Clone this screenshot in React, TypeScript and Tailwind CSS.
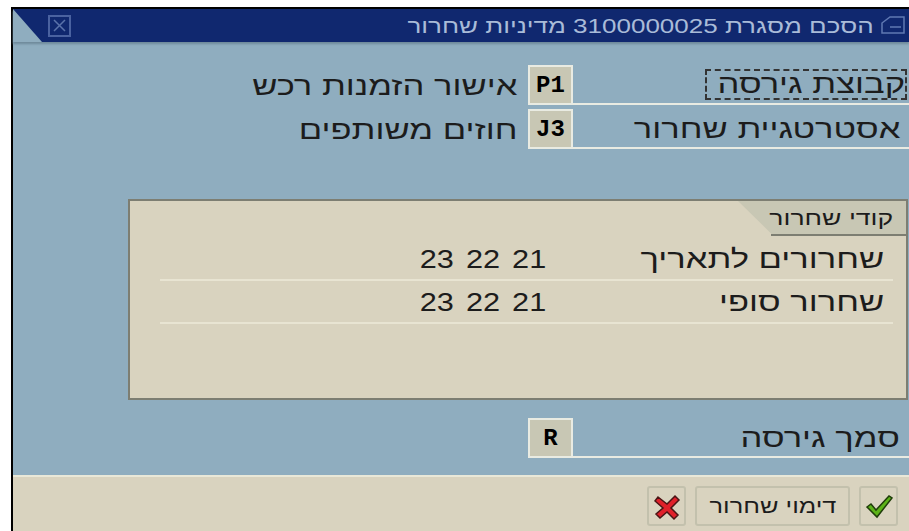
import type { ReactNode } from "react";

const sans = "font-['Liberation_Sans',sans-serif]";

// the screen font is drawn about a third wider than it is tall
const Wide = ({ children }: { children: ReactNode }) => (
  <span className="inline-block origin-right scale-x-[1.33] whitespace-nowrap">{children}</span>
);

const FieldRow = ({
  label,
  code,
  text,
  focused,
}: {
  label: string;
  code: string;
  text?: string;
  focused?: boolean;
}) => (
  <div className="flex h-[40px] w-full items-stretch">
    <div dir="rtl" className="flex w-[515px] items-center pr-[11px] pt-[2px] text-[26px] leading-none text-[#1c1c1c]">
      <Wide>{text}</Wide>
    </div>
    <div className="flex w-[45px] items-center justify-center border-2 border-[#e9ebe2] bg-[#c8c7b4] pt-[2px] font-['Liberation_Mono',monospace] text-[24px] font-bold text-black">
      {code}
    </div>
    <div dir="rtl" className="flex flex-1 items-center border-b-2 border-[#e9ebe2] pr-[2px] text-[26px] leading-none text-[#1c1c1c]">
      {focused ? (
        <span className="flex h-[31px] w-[202px] items-center border-2 border-dashed border-[#333] pb-[1px]">
          <Wide>{label}</Wide>
        </span>
      ) : (
        <span className="pr-[7px] pt-[2px]">
          <Wide>{label}</Wide>
        </span>
      )}
    </div>
  </div>
);

const CodeLine = ({ label, values }: { label: string; values: string }) => (
  <div className="flex h-[43px] items-center border-b-2 border-[#e8e4d2]">
    <span className="w-[386px] text-right text-[26px] leading-none text-[#1c1c1c]">
      <span className="inline-block origin-right scale-x-[1.18] whitespace-nowrap [word-spacing:3px]">{values}</span>
    </span>
    <span dir="rtl" className="flex-1 pr-[9px] text-[26px] leading-none text-[#1c1c1c]">
      <Wide>{label}</Wide>
    </span>
  </div>
);

const ToolButton = ({ children, wide }: { children: ReactNode; wide?: boolean }) => (
  <button
    className={`flex h-[40px] items-center justify-center rounded-[3px] border-2 border-[#c3c1ad] bg-[#d9d3bf] ${wide ? "w-[155px]" : "w-[39px]"}`}
  >
    {children}
  </button>
);

export default function App() {
  return (
    <div className={`h-[531px] w-[909px] overflow-hidden bg-white pl-[11px] pt-[7px] ${sans}`}>
      <div className="flex h-[524px] flex-col border-l-2 border-t-2 border-black bg-[#8fadbf]">
        {/* title bar with the cut corner on the left */}
        <div className="relative flex h-[33px] shrink-0 items-center bg-[#10286f] shadow-[0_2px_2px_#6f8a9b]">
          <svg className="absolute left-0 top-0" width="29" height="33" viewBox="0 0 29 33">
            <polygon points="0,0 0,33 29,33" fill="#8fadbf" />
          </svg>
          <div className="ml-[35px] flex h-[22px] w-[23px] items-center justify-center border-2 border-[#4a62a0]">
            <svg width="13" height="13" viewBox="0 0 13 13" stroke="#5a72aa" strokeWidth="1.5">
              <path d="M1 1 12 12M12 1 1 12" />
            </svg>
          </div>
          <div dir="rtl" className="ml-auto mr-[4px] flex items-center gap-[7px] text-[#a9bbd8]">
            <svg width="24" height="22" viewBox="0 0 24 22" fill="none" stroke="#5f78b2" strokeWidth="1.5">
              <path d="M1 8 9 2H23V18H1Z" />
              <path d="M9 12H20" />
            </svg>
            <span className="text-[20px] leading-none">
              <span className="inline-block origin-right scale-x-[1.3] whitespace-nowrap">הסכם מסגרת 3100000025 מדיניות שחרור</span>
            </span>
          </div>
        </div>

        <div className="flex flex-1 flex-col">
          <div className="pt-[23px]">
            <FieldRow label="קבוצת גירסה" code="P1" text="אישור הזמנות רכש" focused />
          </div>
          <div className="pt-[4px]">
            <FieldRow label="אסטרטגיית שחרור" code="J3" text="חוזים משותפים" />
          </div>

          {/* release codes group */}
          <div className="relative ml-[115px] mr-[1px] mt-[50px] h-[201px] border-2 border-[#7d7e72] bg-[#d9d3bf] pl-[30px] pr-[13px] pt-[37px]">
            <div
              dir="rtl"
              className="absolute right-0 top-0 flex h-[33px] w-[168px] items-center bg-[#c8c7b4] pr-[13px] text-[20px] leading-none text-[#1c1c1c] [clip-path:polygon(0_0,100%_0,100%_100%,20%_100%)]"
            >
              <Wide>קודי שחרור</Wide>
            </div>
            <div className="absolute right-0 top-[33px] h-[2px] w-[135px] bg-[#7d7e72]" />
            <CodeLine label="שחרורים לתאריך" values="23 22 21" />
            <CodeLine label="שחרור סופי" values="23 22 21" />
          </div>

          <div className="pt-[18px]">
            <FieldRow label="סמך גירסה" code="R" />
          </div>
        </div>

        {/* footer toolbar */}
        <div className="flex h-[56px] shrink-0 items-start justify-end gap-[9px] border-t-2 border-[#e9e8d8] bg-[#d9d3bf] pr-[11px] pt-[9px]">
          <ToolButton>
            <svg width="30" height="30" viewBox="0 0 30 30">
              <path d="M6 6 15 13 23 5 27 9 19 17 26 24 22 28 15 21 8 27 4 23 11 17 3 10Z" fill="#e0202a" stroke="#4a1515" strokeWidth="1.5" />
            </svg>
          </ToolButton>
          <ToolButton wide>
            <span dir="rtl" className="text-[20px] leading-none text-[#1c1c1c]">
              <span className="inline-block scale-x-[1.27] whitespace-nowrap">דימוי שחרור</span>
            </span>
          </ToolButton>
          <ToolButton>
            <svg width="30" height="30" viewBox="0 0 30 30">
              <path d="M3 16 7 13 12 19 25 5 28 7 13 26Z" fill="#5cb318" stroke="#1f3d0a" strokeWidth="1.5" />
            </svg>
          </ToolButton>
        </div>
      </div>
    </div>
  );
}
